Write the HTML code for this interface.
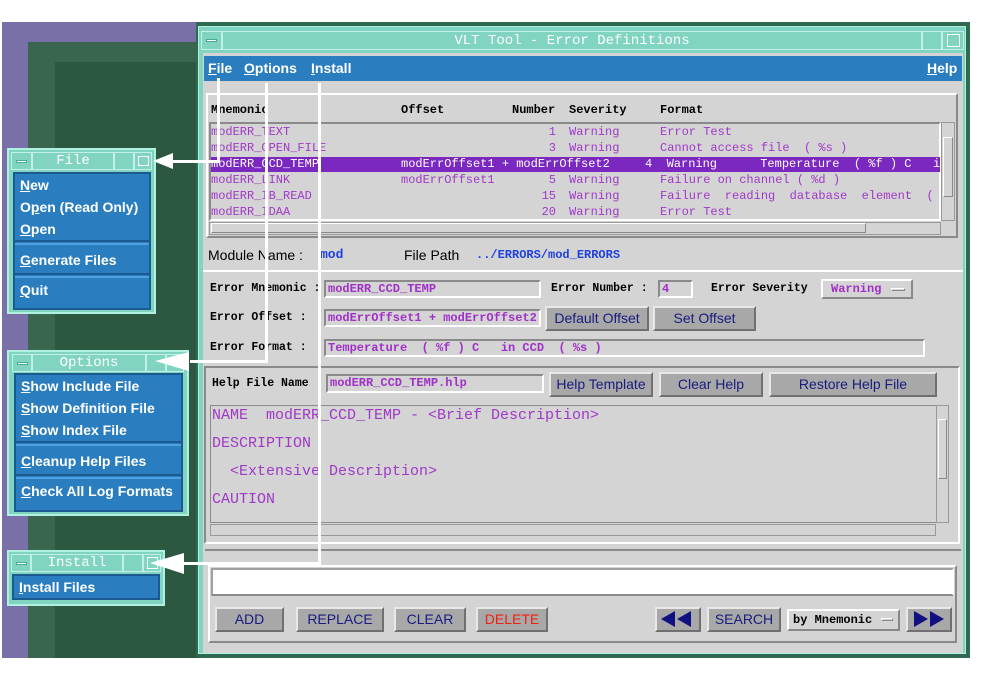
<!DOCTYPE html>
<html><head><meta charset="utf-8"><style>
*{margin:0;padding:0;box-sizing:border-box}
body{width:983px;height:678px;background:#fff;position:relative;overflow:hidden;font-family:"Liberation Sans",sans-serif}
.a{position:absolute}
.mono{font-family:"Liberation Mono",monospace}
.pur{color:#a038c8}
.bl{color:#000;font-weight:bold;font-family:"Liberation Mono",monospace;font-size:11.5px}
.inp{position:absolute;background:#d4d4d4;border:2px solid;border-color:#8a8a8a #fff #fff #8a8a8a;font-family:"Liberation Mono",monospace;font-weight:bold;font-size:12px;color:#a030c8;padding-left:2px;line-height:14px}
.btn{position:absolute;background:#a8a8a8;border:2px solid;border-color:#e8e8e8 #707070 #707070 #e8e8e8;color:#1a1a80;font-size:14px;text-align:center}
.tb{position:absolute;background:#80d4c0;border:1px solid #c0f0e8;color:#fff;font-family:"Liberation Mono",monospace;font-size:14px;text-align:center}
.pop{position:absolute;background:#80d4c0;border:2px solid #b0f0e0}
.menu{position:absolute;background:#2a7ec0;border:2px solid #1a5a90;color:#fff;font-weight:bold;font-size:14px}
.menu div{padding-left:5px;height:22px;line-height:22px}
.sep{border-top:2px solid #1a5a90;border-bottom:2px solid #50a0e0;height:5px!important}
.wl{position:absolute;background:#fff}
u{text-decoration:underline}
.r{position:absolute;font-family:"Liberation Mono",monospace;font-size:12px;color:#a038c8;white-space:pre;line-height:16px}
.hd{position:absolute;top:103px;font-weight:bold;font-family:"Liberation Mono",monospace;font-size:12px}
</style></head><body>
<div class="a" style="left:2px;top:22px;width:194px;height:636px;background:#7a70a8"></div>
<div class="a" style="left:28px;top:42px;width:168px;height:616px;background:#3a6650"></div>
<div class="a" style="left:55px;top:62px;width:141px;height:596px;background:#2c5842"></div>

<div class="a" style="left:196px;top:22px;width:774px;height:636px;background:#2e6a50"></div>
<div class="a" style="left:198px;top:26px;width:768px;height:628px;background:#80d4c0;border:1px solid #b0f0e0"></div>
<div class="tb" style="left:201px;top:31px;width:21px;height:19px"><div style="width:11px;height:3px;background:#fff;margin:7px auto;border:1px solid #4a9"></div></div>
<div class="tb" style="left:222px;top:31px;width:700px;height:19px;line-height:18px">VLT Tool - Error Definitions</div>
<div class="tb" style="left:922px;top:31px;width:20px;height:19px"></div>
<div class="tb" style="left:942px;top:31px;width:22px;height:19px"><div style="width:13px;height:13px;border:1px solid #fff;margin:2px auto"></div></div>
<div class="a" style="left:203px;top:53px;width:760px;height:600px;background:#d4d4d4"></div>
<div class="a" style="left:204px;top:56px;width:758px;height:25px;background:#2a7ec0;color:#fff;font-weight:bold;font-size:14px;line-height:24px">
<span style="position:absolute;left:4px"><u>F</u>ile</span><span style="position:absolute;left:40px"><u>O</u>ptions</span><span style="position:absolute;left:107px"><u>I</u>nstall</span><span style="position:absolute;left:723px"><u>H</u>elp</span></div>

<div class="a" style="left:206px;top:93px;width:752px;height:145px;border:2px solid;border-color:#fff #8a8a8a #8a8a8a #fff"></div>
<div class="hd" style="left:211px">Mnemonic</div>
<div class="hd" style="left:401px">Offset</div>
<div class="hd" style="left:512px">Number</div>
<div class="hd" style="left:569px">Severity</div>
<div class="hd" style="left:660px">Format</div>
<div class="a" style="left:209px;top:122px;width:732px;height:99px;border:2px solid;border-color:#8a8a8a #fff #fff #8a8a8a"></div>
<div class="a" style="left:211px;top:157px;width:729px;height:15px;background:#7a28c0"></div>
<div class="r" style="left:211px;top:124px">modERR_TEXT
modERR_OPEN_FILE
<span style="color:#fff">modERR_CCD_TEMP</span>
modERR_LINK
modERR_IB_READ
modERR_IDAA</div>
<div class="r" style="left:401px;top:124px">

<span style="color:#fff">modErrOffset1 + modErrOffset2</span>
modErrOffset1</div>
<div class="r" style="left:520px;top:124px;width:36px;text-align:right">1
3

5
15
20</div>
<div class="r" style="left:569px;top:124px">Warning
Warning

Warning
Warning
Warning</div>
<div class="r" style="left:660px;top:124px;width:280px;overflow:hidden">Error Test
Cannot access file  ( %s )

Failure on channel ( %d )
Failure  reading  database  element  ( %
Error Test</div>
<div class="r" style="left:645px;top:156px;color:#fff;width:295px;overflow:hidden">4  Warning      Temperature  ( %f ) C   in</div>
<div class="a" style="left:941px;top:122px;width:14px;height:99px;border:1px solid #999"></div>
<div class="a" style="left:943px;top:137px;width:10px;height:60px;border:1px solid;border-color:#fff #888 #888 #fff"></div>
<div class="a" style="left:209px;top:222px;width:732px;height:13px;border:1px solid #999"></div>
<div class="a" style="left:211px;top:223px;width:655px;height:10px;border:1px solid;border-color:#fff #888 #888 #fff"></div>

<div class="a" style="left:208px;top:247px;font-size:14px">Module Name :</div>
<div class="a mono" style="left:320px;top:247px;font-size:13px;font-weight:bold;color:#2040e0">mod</div>
<div class="a" style="left:404px;top:247px;font-size:14px">File Path</div>
<div class="a mono" style="left:476px;top:248px;font-size:12px;font-weight:bold;color:#2040e0">../ERRORS/mod_ERRORS</div>
<div class="a" style="left:203px;top:270px;width:760px;height:2px;background:#fff"></div>

<div class="a bl" style="left:210px;top:282px">Error Mnemonic :</div>
<div class="inp" style="left:324px;top:280px;width:217px;height:18px">modERR_CCD_TEMP</div>
<div class="a bl" style="left:551px;top:282px">Error Number :</div>
<div class="inp" style="left:658px;top:280px;width:35px;height:18px">4</div>
<div class="a bl" style="left:711px;top:282px">Error Severity</div>
<div class="a" style="left:821px;top:279px;width:92px;height:20px;border:2px solid;border-color:#fff #888 #888 #fff;font-family:'Liberation Mono',monospace;font-weight:bold;font-size:12px;color:#a030c8;line-height:16px;padding-left:8px">Warning<span style="position:absolute;left:68px;top:7px;width:14px;height:3px;border:1px solid;border-color:#fff #888 #888 #fff"></span></div>

<div class="a bl" style="left:210px;top:311px">Error Offset :</div>
<div class="inp" style="left:324px;top:309px;width:217px;height:18px">modErrOffset1 + modErrOffset2</div>
<div class="btn" style="left:545px;top:306px;width:104px;height:25px;line-height:21px">Default Offset</div>
<div class="btn" style="left:653px;top:306px;width:103px;height:25px;line-height:21px">Set Offset</div>

<div class="a bl" style="left:210px;top:341px">Error Format :</div>
<div class="inp" style="left:324px;top:339px;width:601px;height:18px;white-space:pre">Temperature  ( %f ) C   in CCD  ( %s )</div>

<div class="a" style="left:204px;top:366px;width:756px;height:178px;border:2px solid;border-color:#8a8a8a #fff #fff #8a8a8a"></div>
<div class="a bl" style="left:212px;top:377px">Help File Name :</div>
<div class="inp" style="left:326px;top:374px;width:218px;height:19px">modERR_CCD_TEMP.hlp</div>
<div class="btn" style="left:549px;top:372px;width:104px;height:25px;line-height:21px">Help Template</div>
<div class="btn" style="left:659px;top:372px;width:104px;height:25px;line-height:21px">Clear Help</div>
<div class="btn" style="left:769px;top:372px;width:168px;height:25px;line-height:21px">Restore Help File</div>
<div class="a" style="left:210px;top:405px;width:726px;height:118px;border:1px solid #8a8a8a;border-right:none"></div>
<div class="a mono pur" style="left:212px;top:402px;font-size:15px;line-height:28px;white-space:pre">NAME  modERR_CCD_TEMP - &lt;Brief Description&gt;
DESCRIPTION
  &lt;Extensive Description&gt;
CAUTION</div>
<div class="a" style="left:936px;top:405px;width:13px;height:118px;border:1px solid #999"></div>
<div class="a" style="left:938px;top:419px;width:9px;height:60px;border:1px solid;border-color:#fff #888 #888 #fff"></div>
<div class="a" style="left:210px;top:524px;width:726px;height:12px;border:1px solid #999"></div>
<div class="a" style="left:205px;top:549px;width:756px;height:2px;background:#8a8a8a"></div>

<div class="a" style="left:208px;top:565px;width:749px;height:78px;border:2px solid;border-color:#fff #8a8a8a #8a8a8a #fff"></div>
<div class="a" style="left:211px;top:568px;width:743px;height:28px;background:#fff;border:2px solid;border-color:#a0a0a0 #fff #8a8a8a #a0a0a0"></div>
<div class="btn" style="left:215px;top:607px;width:69px;height:25px;line-height:21px">ADD</div>
<div class="btn" style="left:296px;top:607px;width:88px;height:25px;line-height:21px">REPLACE</div>
<div class="btn" style="left:394px;top:607px;width:72px;height:25px;line-height:21px">CLEAR</div>
<div class="btn" style="left:476px;top:607px;width:72px;height:25px;line-height:21px;color:#f02010">DELETE</div>
<div class="btn" style="left:655px;top:607px;width:46px;height:25px"><svg width="42" height="21"><path d="M4 10L18 2V18Z M20 10L34 2V18Z" fill="#101080"/></svg></div>
<div class="btn" style="left:707px;top:607px;width:74px;height:25px;line-height:21px">SEARCH</div>
<div class="a" style="left:787px;top:609px;width:113px;height:22px;border:2px solid;border-color:#fff #888 #888 #fff;font-family:'Liberation Mono',monospace;font-weight:bold;font-size:12px;line-height:18px;padding-left:4px">by Mnemonic<span style="position:absolute;left:92px;top:7px;width:12px;height:3px;border:1px solid;border-color:#fff #888 #888 #fff"></span></div>
<div class="btn" style="left:906px;top:607px;width:46px;height:25px"><svg width="42" height="21"><path d="M6 2L20 10L6 18Z M22 2L36 10L22 18Z" fill="#101080"/></svg></div>

<div class="pop" style="left:7px;top:148px;width:149px;height:166px"></div>
<div class="tb" style="left:11px;top:152px;width:21px;height:18px"><div style="width:11px;height:3px;background:#fff;margin:7px auto;border:1px solid #4a9"></div></div>
<div class="tb" style="left:32px;top:152px;width:82px;height:18px;line-height:17px">File</div>
<div class="tb" style="left:114px;top:152px;width:20px;height:18px"></div>
<div class="tb" style="left:134px;top:152px;width:18px;height:18px"><div style="width:11px;height:10px;border:1px solid #fff;margin:3px auto"></div></div>
<div class="menu" style="left:13px;top:172px;width:138px;height:138px">
<div><u>N</u>ew</div><div>O<u>p</u>en (Read Only)</div><div><u>O</u>pen</div><div class="sep"></div><div style="height:28px;line-height:30px"><u>G</u>enerate Files</div><div class="sep"></div><div style="height:26px;line-height:24px"><u>Q</u>uit</div></div>

<div class="pop" style="left:7px;top:350px;width:182px;height:166px"></div>
<div class="tb" style="left:12px;top:354px;width:20px;height:18px"><div style="width:11px;height:3px;background:#fff;margin:7px auto;border:1px solid #4a9"></div></div>
<div class="tb" style="left:32px;top:354px;width:114px;height:18px;line-height:17px">Options</div>
<div class="tb" style="left:146px;top:354px;width:20px;height:18px"></div>
<div class="tb" style="left:166px;top:354px;width:18px;height:18px"></div>
<div class="menu" style="left:14px;top:373px;width:169px;height:139px">
<div><u>S</u>how Include File</div><div><u>S</u>how Definition File</div><div><u>S</u>how Index File</div><div class="sep"></div><div style="height:28px;line-height:30px"><u>C</u>leanup Help Files</div><div class="sep"></div><div style="height:26px;line-height:24px"><u>C</u>heck All Log Formats</div></div>

<div class="pop" style="left:7px;top:550px;width:158px;height:56px"></div>
<div class="tb" style="left:11px;top:554px;width:20px;height:18px"><div style="width:11px;height:3px;background:#fff;margin:7px auto;border:1px solid #4a9"></div></div>
<div class="tb" style="left:31px;top:554px;width:92px;height:18px;line-height:17px">Install</div>
<div class="tb" style="left:123px;top:554px;width:20px;height:18px"></div>
<div class="tb" style="left:143px;top:554px;width:18px;height:18px"><div style="width:11px;height:12px;border:1px solid #fff;margin:2px auto"></div></div>
<div class="menu" style="left:12px;top:574px;width:148px;height:26px"><div style="line-height:22px"><u>I</u>nstall Files</div></div>

<div class="wl" style="left:217px;top:78px;width:3px;height:84px"></div>
<div class="wl" style="left:172px;top:160px;width:48px;height:3px"></div>
<svg class="a" style="left:153px;top:152px" width="22" height="18"><path d="M0 9L20 1V17Z" fill="#fff"/></svg>
<div class="wl" style="left:265px;top:83px;width:3px;height:280px"></div>
<div class="wl" style="left:190px;top:360px;width:78px;height:3px"></div>
<svg class="a" style="left:155px;top:351px" width="36" height="22"><path d="M0 10L34 1V20Z" fill="#fff"/></svg>
<div class="wl" style="left:318px;top:83px;width:3px;height:482px"></div>
<div class="wl" style="left:183px;top:562px;width:138px;height:3px"></div>
<svg class="a" style="left:150px;top:552px" width="36" height="22"><path d="M0 11L34 1V22Z" fill="#fff"/></svg>
</body></html>
